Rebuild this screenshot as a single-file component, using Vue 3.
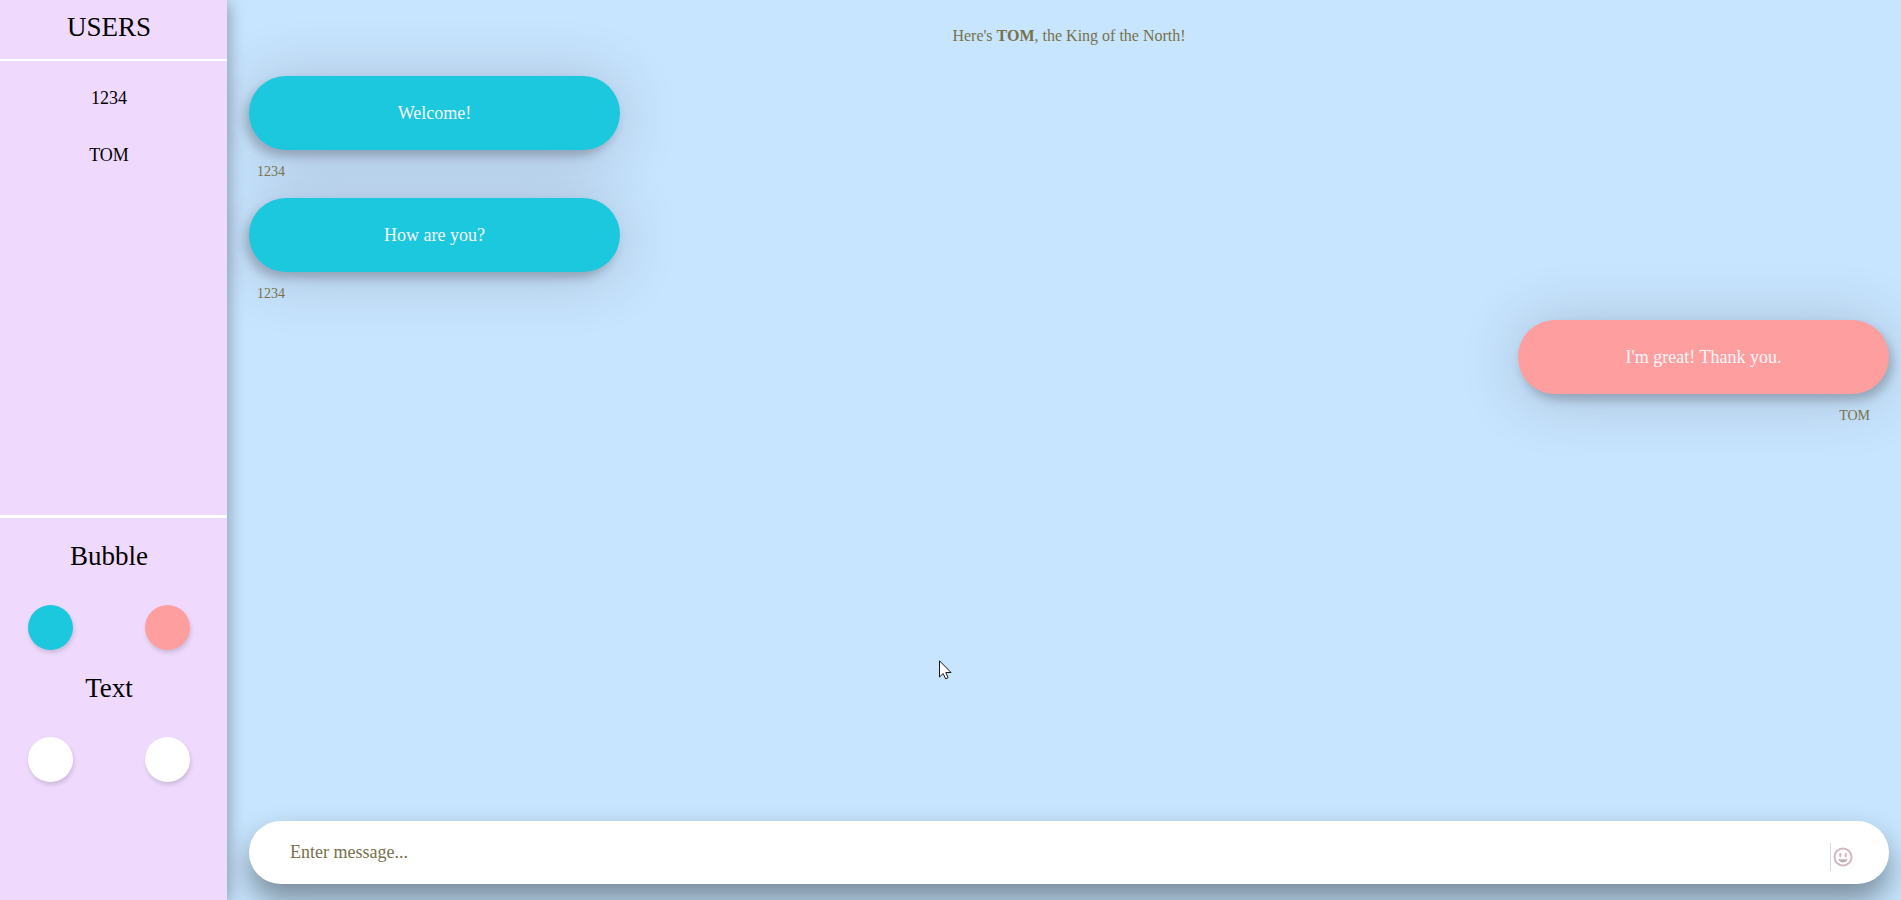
<script setup>
import { ref } from 'vue'

const users = ['1234', 'TOM']
const messages = [
  { id: 1, text: 'Welcome!', author: '1234', mine: false },
  { id: 2, text: 'How are you?', author: '1234', mine: false },
  { id: 3, text: "I'm great! Thank you.", author: 'TOM', mine: true },
]
const palettes = [
  { title: 'Bubble', swatches: [{ cls: 'teal', label: 'Their bubble' }, { cls: 'coral', label: 'My bubble' }] },
  { title: 'Text', swatches: [{ cls: 'white', label: 'Their text' }, { cls: 'white', label: 'My text' }] },
]
const draft = ref('')
</script>

<template>
  <div class="chat">
    <aside class="sidebar">
      <h2 class="title users-title">USERS</h2>
      <ul class="users">
        <li v-for="user in users" :key="user">{{ user }}</li>
      </ul>
      <div class="settings">
        <section v-for="palette in palettes" :key="palette.title">
          <h2 class="title">{{ palette.title }}</h2>
          <div class="swatches">
            <button
              v-for="swatch in palette.swatches"
              :key="swatch.label"
              type="button"
              class="swatch"
              :class="swatch.cls"
              :aria-label="swatch.label"
            ></button>
          </div>
        </section>
      </div>
    </aside>

    <main class="room">
      <p class="notice">Here's <b>TOM</b>, the King of the North!</p>
      <div class="messages">
        <article v-for="m in messages" :key="m.id" class="message" :class="{ mine: m.mine }">
          <p class="bubble">{{ m.text }}</p>
          <span class="author">{{ m.author }}</span>
        </article>
      </div>
      <form class="composer" @submit.prevent>
        <input v-model="draft" type="text" class="field" placeholder="Enter message..." aria-label="Message" />
        <button type="button" class="emoji" aria-label="Insert emoji">
          <svg width="20" height="20" viewBox="0 0 20 20" fill="none">
            <circle cx="10" cy="10" r="8.5" stroke="#d2b8c2" stroke-width="2" />
            <ellipse cx="7.3" cy="8" rx="1.1" ry="2.300" fill="#d0b4b8" />
            <ellipse cx="12.7" cy="8" rx="1.1" ry="2.300" fill="#d0b4b8" />
            <path d="M5.5 12.200h9c-.5 2-2.200 3-4.500 3s-4-1-4.500-3z" fill="#b5a0a8" />
            <path d="M6.800 13h6.400" stroke="#d8d0d8" stroke-width="0.800" />
          </svg>
        </button>
      </form>
    </main>

    <svg class="pointer" width="13" height="20" viewBox="0 0 13 20" aria-hidden="true">
      <path d="M.5.8v16.200l3.700-3.500 2.400 5.300 2.500-1.100-2.300-5.200h5.200z" fill="#fff" stroke="#1c1418" />
    </svg>
  </div>
</template>

<style>
body {
  margin: 0;
}
</style>

<style scoped>
.chat {
  display: flex;
  position: relative;
  min-height: 100vh;
  overflow: hidden;
  background: #c7e5fe;
  font-family: "Liberation Serif", "Times New Roman", serif;
  font-size: 18px;
  color: #000;
}

.sidebar {
  display: flex;
  flex-direction: column;
  flex: 0 0 227px;
  position: relative;
  z-index: 1;
  background: #efdafe;
  box-shadow: 3px 3px 14px rgba(0, 0, 0, 0.28);
}

.title {
  margin: 0;
  padding-right: 9px;
  font-size: 27px;
  font-weight: 400;
  line-height: 76px;
  text-align: center;
}

.users-title {
  padding-bottom: 5px;
  border-bottom: 2px solid #fff;
  line-height: 54px;
}

.users {
  flex: 1;
  margin: 0;
  padding: 9px 9px 0 0;
  list-style: none;
  line-height: 57px;
  text-align: center;
}

.settings {
  padding-bottom: 118px;
  border-top: 3px solid #fff;
}

.swatches {
  display: flex;
  justify-content: space-between;
  padding: 11px 37px 0 28px;
}

.swatch {
  width: 45px;
  height: 45px;
  padding: 0;
  border: 0;
  border-radius: 50%;
  box-shadow: 1px 3px 4px rgba(0, 0, 0, 0.14);
  cursor: pointer;
}

.teal {
  background: #1bc8de;
}

.coral {
  background: #ff9e9e;
}

.white {
  background: #fff;
}

.room {
  display: flex;
  flex-direction: column;
  flex: 1;
  min-width: 0;
  padding: 0 12px 16px 22px;
}

.notice {
  margin: 0 0 4px;
  color: #78714a;
  font-size: 16px;
  line-height: 72px;
  text-align: center;
}

.messages {
  display: flex;
  flex-direction: column;
  flex: 1;
}

.message {
  display: flex;
  flex-direction: column;
  align-items: flex-start;
  padding-bottom: 16px;
}

.message.mine {
  align-items: flex-end;
}

.bubble {
  box-sizing: border-box;
  min-width: 371px;
  margin: 0 0 12px;
  padding: 25px 40px;
  border-radius: 37px;
  background: #1bc8de;
  box-shadow: -4px 6px 10px rgba(0, 0, 0, 0.2), 0 4px 60px rgba(70, 50, 80, 0.24);
  color: #f6f6fa;
  line-height: 24px;
  text-align: center;
}

.mine .bubble {
  background: #ff9e9e;
  box-shadow: 4px 6px 10px rgba(0, 0, 0, 0.2), 0 4px 60px rgba(70, 50, 80, 0.24);
}

.author {
  position: relative;
  padding: 0 19px 0 8px;
  color: #78714a;
  font-size: 14px;
  line-height: 20px;
}

.composer {
  display: flex;
  align-items: flex-end;
  height: 63px;
  padding-right: 31px;
  border-radius: 32px;
  background: #fff;
  box-shadow: 0 16px 30px rgba(0, 0, 0, 0.4);
}

.field {
  flex: 1;
  align-self: stretch;
  min-width: 0;
  padding: 0 20px 0 41px;
  border: 0;
  outline: 0;
  background: transparent;
  color: #78714a;
  font: inherit;
}

.field::placeholder {
  color: #78714a;
  opacity: 1;
}

.emoji {
  display: flex;
  align-items: center;
  justify-content: center;
  width: 28px;
  height: 28px;
  margin-bottom: 13px;
  padding: 0 3px 0 0;
  border: 0;
  border-left: 1px solid #e2d3e6;
  background: transparent;
  cursor: pointer;
}

.pointer {
  position: absolute;
  top: 660px;
  left: 939px;
  z-index: 2;
}
</style>
